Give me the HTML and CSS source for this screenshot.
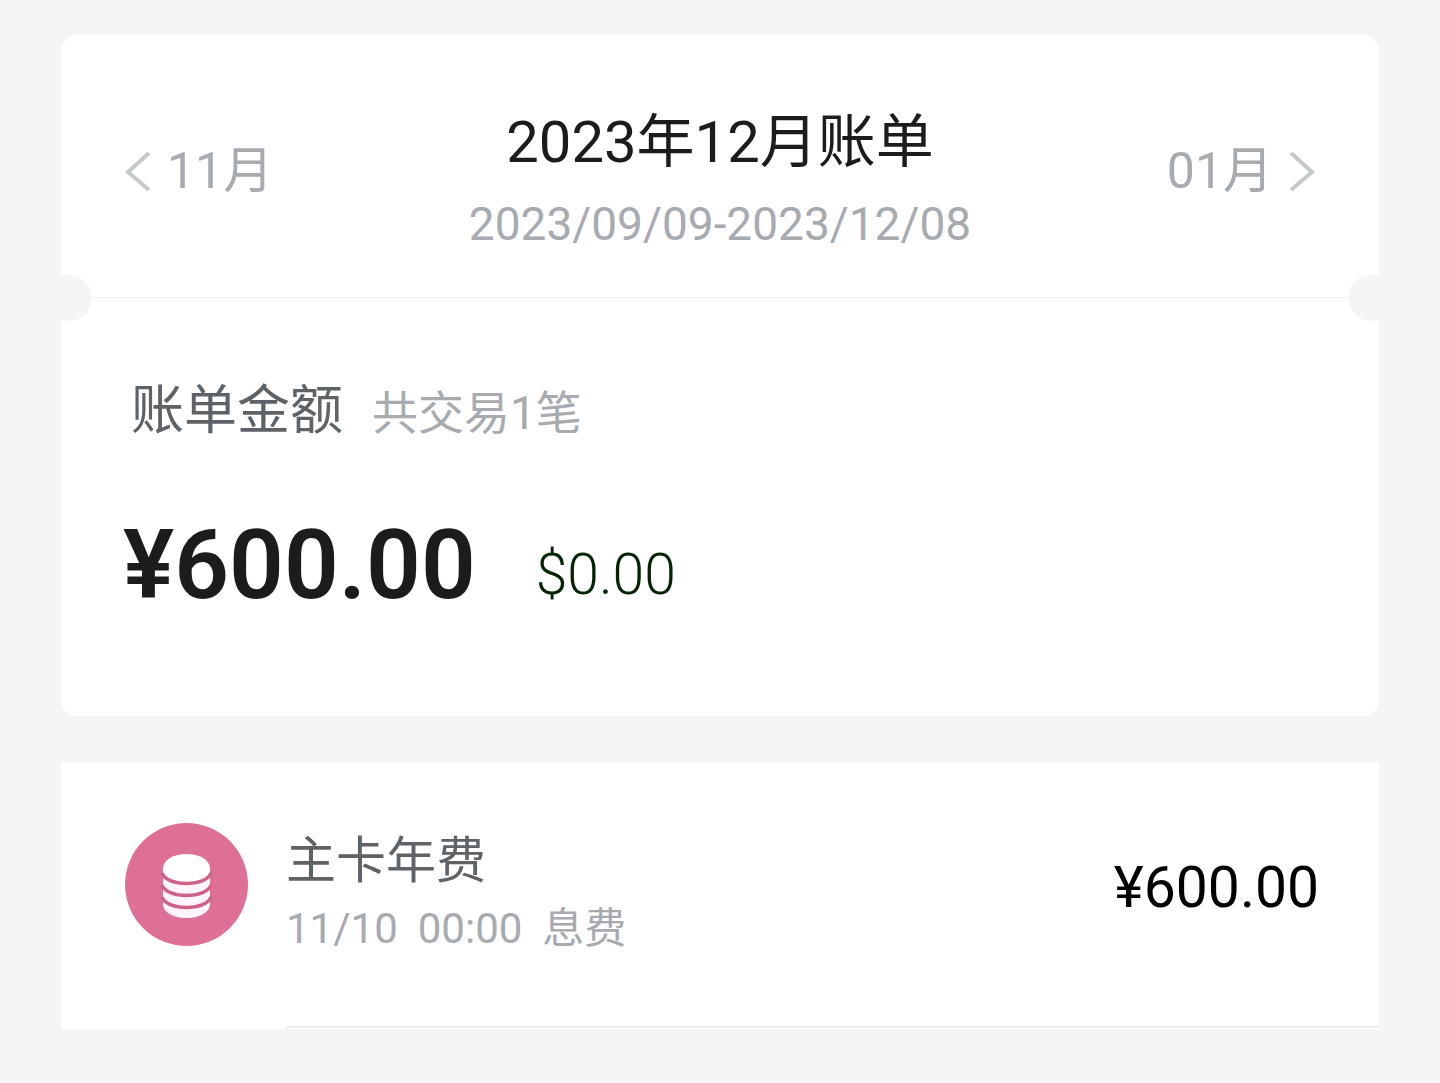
FILE: index.html
```html
<!DOCTYPE html>
<html lang="zh-CN">
<head>
<meta charset="utf-8">
<meta name="viewport" content="width=device-width, initial-scale=1">
<title>2023年12月账单</title>
<link rel="stylesheet" href="styles.css">
</head>
<body>
<main class="page">
  <section class="bill">
    <header class="bill-header">
      <button class="month" type="button">
        <svg class="chevron" viewBox="0 0 26 42" aria-hidden="true"><path d="M24 3 3 22l21 18"/></svg>
        <span>11月</span>
      </button>
      <div class="period">
        <h1 class="period-title">2023年12月账单</h1>
        <p class="period-range">2023/09/09-2023/12/08</p>
      </div>
      <button class="month month-next" type="button">
        <span>01月</span>
        <svg class="chevron" viewBox="0 0 26 42" aria-hidden="true"><path d="M2 3l21 19L2 40"/></svg>
      </button>
    </header>
    <div class="bill-body">
      <div class="summary">
        <h2 class="summary-title">账单金额</h2>
        <span class="summary-count">共交易1笔</span>
      </div>
      <div class="amounts">
        <strong class="amount-cny">¥600.00</strong>
        <span class="amount-usd">$0.00</span>
      </div>
    </div>
  </section>
  <ul class="records">
    <li class="record">
      <svg class="record-icon" viewBox="0 0 123 123" aria-hidden="true">
        <circle cx="61.5" cy="61.5" r="61.5" fill="#de7098"/>
        <path d="M38 45v36c0 8 10 14 23.500 14s23.500-6 23.500-14V45z" fill="#fff4f9"/>
        <ellipse cx="61.500" cy="45" rx="23.500" ry="14" fill="#fff"/>
        <path d="M37 50C42 64 81 64 86 50M37 62C42 76 81 76 86 62M37 74C42 88 81 88 86 74" fill="none" stroke="#cd6189" stroke-width="3.500"/>
      </svg>
      <div class="record-text">
        <h3 class="record-name">主卡年费</h3>
        <p class="record-meta"><span>11/10</span><span>00:00</span><span>息费</span></p>
      </div>
      <span class="record-amount">¥600.00</span>
    </li>
  </ul>
</main>
</body>
</html>
```
FILE: styles.css
```css
* {
  box-sizing: border-box;
}

body {
  margin: 0;
  background: #f5f5f5;
  color: #1c1c1c;
  font-family: Roboto, "Noto Sans CJK SC", sans-serif;
}

h1, h2, h3, p, ul {
  margin: 0;
  padding: 0;
  font-weight: 400;
}

.page {
  padding: 35px 61px 54px;
}

.bill {
  overflow: hidden;
  border-radius: 16px;
  background: #fff;
}

.bill-header {
  position: relative;
  display: grid;
  grid-template-columns: 1fr auto 1fr;
  align-items: start;
  padding: 67px 64px 43px;
  border-bottom: 1px solid #efefef;
}

/* Ticket notches at both ends of the divider */
.bill-header::before,
.bill-header::after {
  content: "";
  position: absolute;
  bottom: -24px;
  width: 46px;
  height: 46px;
  border-radius: 50%;
  background: #f5f5f5;
}

.bill-header::before {
  left: -15px;
}

.bill-header::after {
  right: -15px;
}

.month {
  display: flex;
  align-items: center;
  justify-self: start;
  gap: 16px;
  margin-top: 39px;
  padding: 0;
  border: 0;
  background: none;
  color: #a7abaf;
  font: inherit;
  font-size: 50px;
  line-height: 60px;
}

.month-next {
  justify-self: end;
}

.chevron {
  width: 26px;
  height: 42px;
  fill: none;
  stroke: #c6c9c9;
  stroke-width: 4;
}

.period {
  text-align: center;
}

.period-title {
  font-size: 58px;
  line-height: 80px;
}

.period-range {
  margin-top: 12px;
  color: #a7abaf;
  font-size: 46px;
  line-height: 60px;
}

.bill-body {
  padding: 77px 62px 95px;
}

.summary {
  display: flex;
  align-items: baseline;
  gap: 29px;
  padding-left: 8px;
  line-height: 72px;
}

.summary-title {
  color: #5e6368;
  font-size: 53px;
}

.summary-count {
  color: #a7abaf;
  font-size: 46px;
}

.amounts {
  display: flex;
  align-items: flex-end;
  gap: 60px;
  margin-top: 60px;
}

.amount-cny {
  font-size: 96px;
  font-weight: 600;
  line-height: 112px;
}

.amount-usd {
  color: #052305;
  font-size: 57px;
  font-weight: 300;
  line-height: 92px;
}

.records {
  margin-top: 46px;
  padding-bottom: 1px;
  background: #fff;
  list-style: none;
}

.record {
  display: flex;
  align-items: flex-start;
  padding: 61px 60px 71px 64px;
  background: linear-gradient(#ececec, #ececec) 225px 100% / 100% 2px no-repeat;
}

.record-icon {
  flex: none;
  width: 123px;
  height: 123px;
}

.record-text {
  flex: 1;
  padding: 6px 0 0 38px;
}

.record-name {
  color: #5e6368;
  font-size: 50px;
  line-height: 64px;
}

.record-meta {
  display: flex;
  gap: 20px;
  margin-top: 8px;
  color: #a7abaf;
  font-size: 42px;
  line-height: 56px;
}

.record-amount {
  padding-top: 29px;
  color: #000;
  font-size: 57px;
  line-height: 72px;
}
```
